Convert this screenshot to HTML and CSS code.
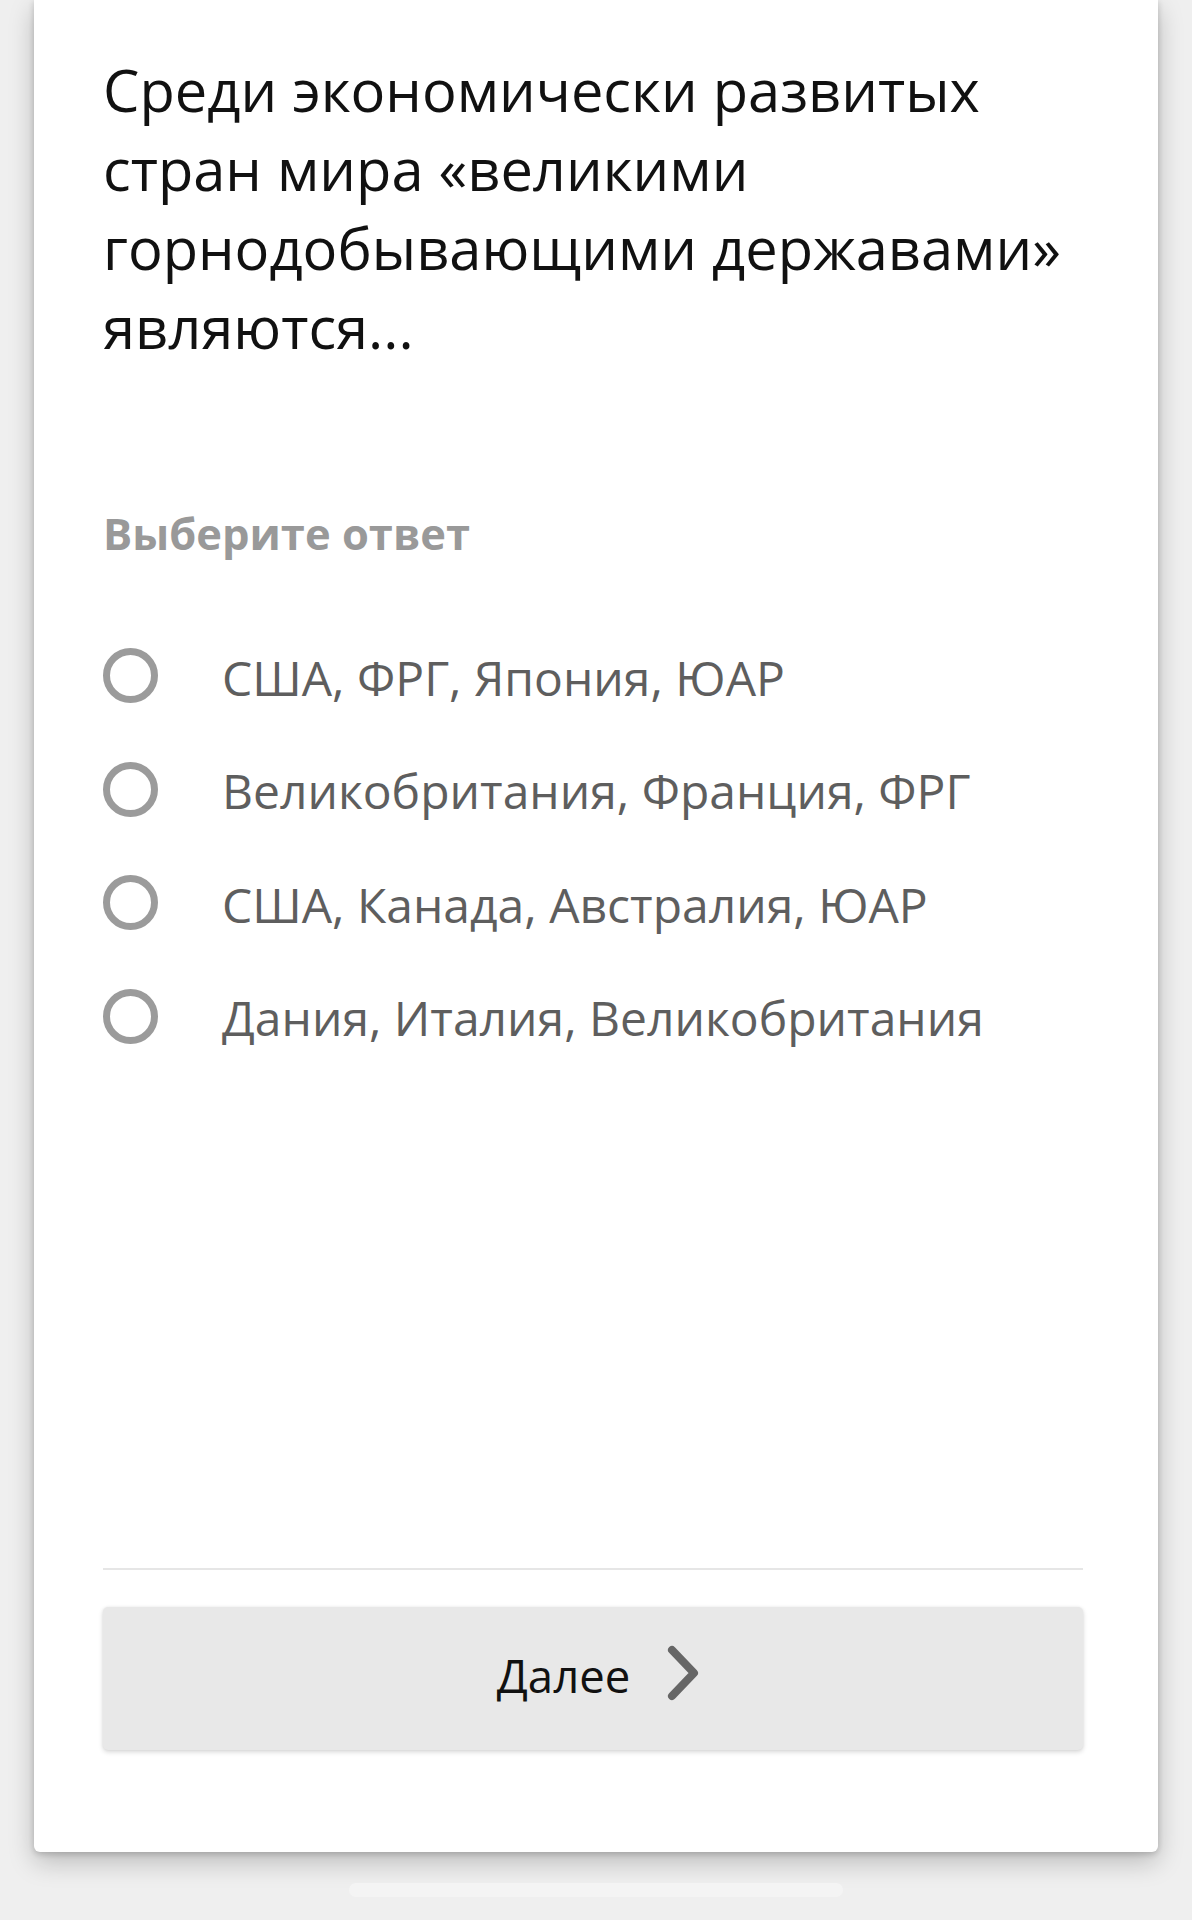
FILE: index.html
```html
<!DOCTYPE html>
<html lang="ru">
<head>
<meta charset="utf-8">
<title>Вопрос</title>
<link rel="stylesheet" href="styles.css">
</head>
<body>
<main class="card">
  <h1 class="question">Среди экономически развитых стран мира «великими горнодобывающими державами» являются...</h1>
  <div class="prompt">Выберите ответ</div>
  <ul class="options">
    <li class="option"><span class="radio"></span><span class="option-text">США, ФРГ, Япония, ЮАР</span></li>
    <li class="option"><span class="radio"></span><span class="option-text">Великобритания, Франция, ФРГ</span></li>
    <li class="option"><span class="radio"></span><span class="option-text">США, Канада, Австралия, ЮАР</span></li>
    <li class="option"><span class="radio"></span><span class="option-text">Дания, Италия, Великобритания</span></li>
  </ul>
  <footer class="footer">
    <hr class="divider">
    <button class="next-btn" type="button">
      <span class="next-label">Далее</span>
      <svg class="chevron" width="32" height="56" viewBox="0 0 32 56" aria-hidden="true"><path d="M5 5 L27 28 L5 51" fill="none" stroke="#666" stroke-width="8" stroke-linecap="round" stroke-linejoin="round"/></svg>
    </button>
  </footer>
</main>
<div class="home-bar"></div>
</body>
</html>
```

FILE: styles.css
```css
* { box-sizing: border-box; }
html, body { margin: 0; padding: 0; }
body {
  background: #efefef;
  font-family: "Open Sans", "Noto Sans", sans-serif;
  width: 1192px;
  height: 1920px;
  overflow: hidden;
}
.card {
  margin: 0 34px;
  height: 1852px;
  background: #fff;
  border-radius: 0 0 6px 6px;
  box-shadow: 0 10px 26px rgba(0,0,0,0.22), 0 2px 6px rgba(0,0,0,0.18);
  padding: 50px 75px 102px 69px;
  display: flex;
  flex-direction: column;
}
.question {
  margin: 0;
  font-size: 57.8px;
  line-height: 79px;
  font-weight: 400;
  color: #111;
}
.prompt {
  margin-top: 140px;
  font-size: 43.5px;
  line-height: 56px;
  font-weight: 700;
  color: #999;
}
.options {
  list-style: none;
  margin: 57px 0 0;
  padding: 0;
}
.option {
  height: 113.5px;
  display: flex;
  align-items: center;
}
.radio {
  width: 55px;
  height: 55px;
  border: 7px solid #9b9b9b;
  border-radius: 50%;
  flex: none;
}
.option-text {
  margin-left: 64px;
  font-size: 48px;
  line-height: 60px;
  color: #5e5e5e;
  padding-top: 4px;
}
.footer {
  margin-top: auto;
  display: flex;
  flex-direction: column;
}
.divider {
  margin: 0;
  border: none;
  height: 2px;
  background: #e6e6e6;
}
.next-btn {
  margin-top: 37px;
  height: 143px;
  border: none;
  border-radius: 5px;
  background: #e8e8e8;
  box-shadow: 0 2px 5px rgba(0,0,0,0.16), 0 0 3px rgba(0,0,0,0.05);
  display: flex;
  align-items: center;
  justify-content: center;
  gap: 37px;
  padding: 0 0 8px 10px;
  font-family: inherit;
}
.next-label {
  font-size: 45.5px;
  line-height: 60px;
  color: #111;
}
.chevron { display: block; margin-top: -4px; }
.home-bar {
  width: 494px;
  height: 14px;
  margin: 31px auto 0 349px;
  border-radius: 7px;
  background: #f4f4f4;
}
```
